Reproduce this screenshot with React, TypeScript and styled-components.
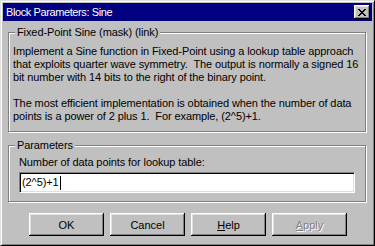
import styled, { createGlobalStyle } from 'styled-components';

const GlobalStyle = createGlobalStyle`
  body {
    margin: 0;
    background: #c0c0c0;
  }
`;

// Ventana principal estilo Windows clásico
const Window = styled.div`
  width: 375px;
  height: 246px;
  box-sizing: border-box;
  background: #c0c0c0;
  border: 1px solid;
  border-color: #dfdfdf #000 #000 #dfdfdf;
  box-shadow: inset 1px 1px #fff, inset -1px -1px #808080;
  padding: 2px;
  display: flex;
  flex-direction: column;
  font-family: "Liberation Sans", Arial, sans-serif;
  font-size: 11px;
  letter-spacing: -0.1px;
  color: #000;
  overflow: hidden;
`;

const TitleBar = styled.div`
  height: 18px;
  flex: none;
  background: #000080;
  color: #fff;
  display: flex;
  align-items: center;
  justify-content: space-between;
  padding: 0 2px 0 3px;
`;

const Title = styled.span`
  font-size: 11px;
  line-height: 13px;
  letter-spacing: -0.4px;
`;

const CloseButton = styled.button`
  width: 16px;
  height: 14px;
  padding: 0;
  border: none;
  background: #c0c0c0;
  box-shadow: inset -1px -1px #000, inset 1px 1px #fff, inset -2px -2px #808080, inset 2px 2px #dfdfdf;
  display: flex;
  align-items: center;
  justify-content: center;
`;

const Body = styled.div`
  flex: 1;
  display: flex;
  flex-direction: column;
  padding: 5px 6px 7px 5px;
`;

const Group = styled.fieldset<{ $bottom: number; $top?: number }>`
  margin: ${(p) => p.$top ?? 0}px 0 0 0;
  padding: 0 4px ${(p) => p.$bottom}px 4px;
  border: 1px solid #808080;
  box-shadow: inset 1px 1px #fff, 1px 1px #fff;
  min-width: 0;
`;

const Legend = styled.legend`
  margin-left: 2px;
  padding: 0 2px;
  line-height: 13px;
  background: #c0c0c0;
`;

const GroupContent = styled.div<{ $inset: number; $top: number }>`
  padding: ${(p) => p.$top}px ${(p) => p.$inset}px 0 ${(p) => p.$inset}px;
`;

const Text = styled.p<{ $gap?: number }>`
  margin: ${(p) => p.$gap ?? 0}px 0 0 0;
  line-height: 13px;
  white-space: nowrap;
`;

const EditField = styled.div`
  margin-top: 3px;
  height: 21px;
  box-sizing: border-box;
  background: #fff;
  border: 1px solid;
  border-color: #808080 #fff #fff #808080;
  box-shadow: inset 1px 1px #000, inset -1px -1px #dfdfdf;
  padding: 1px 2px;
  display: flex;
  align-items: center;
  line-height: 15px;
`;

const Caret = styled.span`
  display: inline-block;
  width: 1px;
  height: 14px;
  background: #000;
  margin-left: 1px;
`;

const ButtonRow = styled.div`
  margin-top: 11px;
  display: flex;
  gap: 6px;
  padding-left: 21px;
`;

const Button = styled.button<{ $disabled?: boolean }>`
  width: 75px;
  height: 23px;
  flex: none;
  padding: 0;
  border: none;
  background: #c0c0c0;
  box-shadow: inset -1px -1px #000, inset 1px 1px #fff, inset -2px -2px #808080, inset 2px 2px #dfdfdf;
  font-family: "Liberation Sans", Arial, sans-serif;
  font-size: 11px;
  color: ${(p) => (p.$disabled ? '#808080' : '#000')};
  text-shadow: ${(p) => (p.$disabled ? '1px 1px #fff' : 'none')};
`;

const Key = styled.span`
  text-decoration: underline;
`;

// Glifo de cerrar, dibujado píxel a píxel
const CloseGlyph = () => {
  const rows = ['11000011', '01100110', '00111100', '00011000', '00111100', '01100110', '11000011'];
  return (
    <svg width="8" height="7" viewBox="0 0 8 7" shapeRendering="crispEdges">
      {rows.map((r, y) =>
        r.split('').map((c, x) => (c === '1' ? <rect key={`${x}-${y}`} x={x} y={y} width="1" height="1" fill="#000" /> : null))
      )}
    </svg>
  );
};

export default function App() {
  return (
    <>
      <GlobalStyle />
      <Window>
        <TitleBar>
          <Title>Block Parameters: Sine</Title>
          <CloseButton aria-label="Cerrar">
            <CloseGlyph />
          </CloseButton>
        </TitleBar>
        <Body>
          <Group $bottom={8}>
            <Legend>Fixed-Point Sine (mask) (link)</Legend>
            <GroupContent $inset={0} $top={6}>
              <Text>
                Implement a Sine function in Fixed-Point using a lookup table approach
                <br />
                that exploits quarter wave symmetry.&nbsp; The output is normally a signed 16
                <br />
                bit number with 14 bits to the right of the binary point.
              </Text>
              <Text $gap={13}>
                The most efficient implementation is obtained when the number of data
                <br />
                points is a power of 2 plus 1.&nbsp; For example, (2^5)+1.
              </Text>
            </GroupContent>
          </Group>
          <Group $bottom={8} $top={7}>
            <Legend>Parameters</Legend>
            <GroupContent $inset={6} $top={4}>
              <Text>Number of data points for lookup table:</Text>
              <EditField>
                (2^5)+1
                <Caret />
              </EditField>
            </GroupContent>
          </Group>
          <ButtonRow>
            <Button>OK</Button>
            <Button>Cancel</Button>
            <Button>
              <Key>H</Key>elp
            </Button>
            <Button $disabled>
              <Key>A</Key>pply
            </Button>
          </ButtonRow>
        </Body>
      </Window>
    </>
  );
}
